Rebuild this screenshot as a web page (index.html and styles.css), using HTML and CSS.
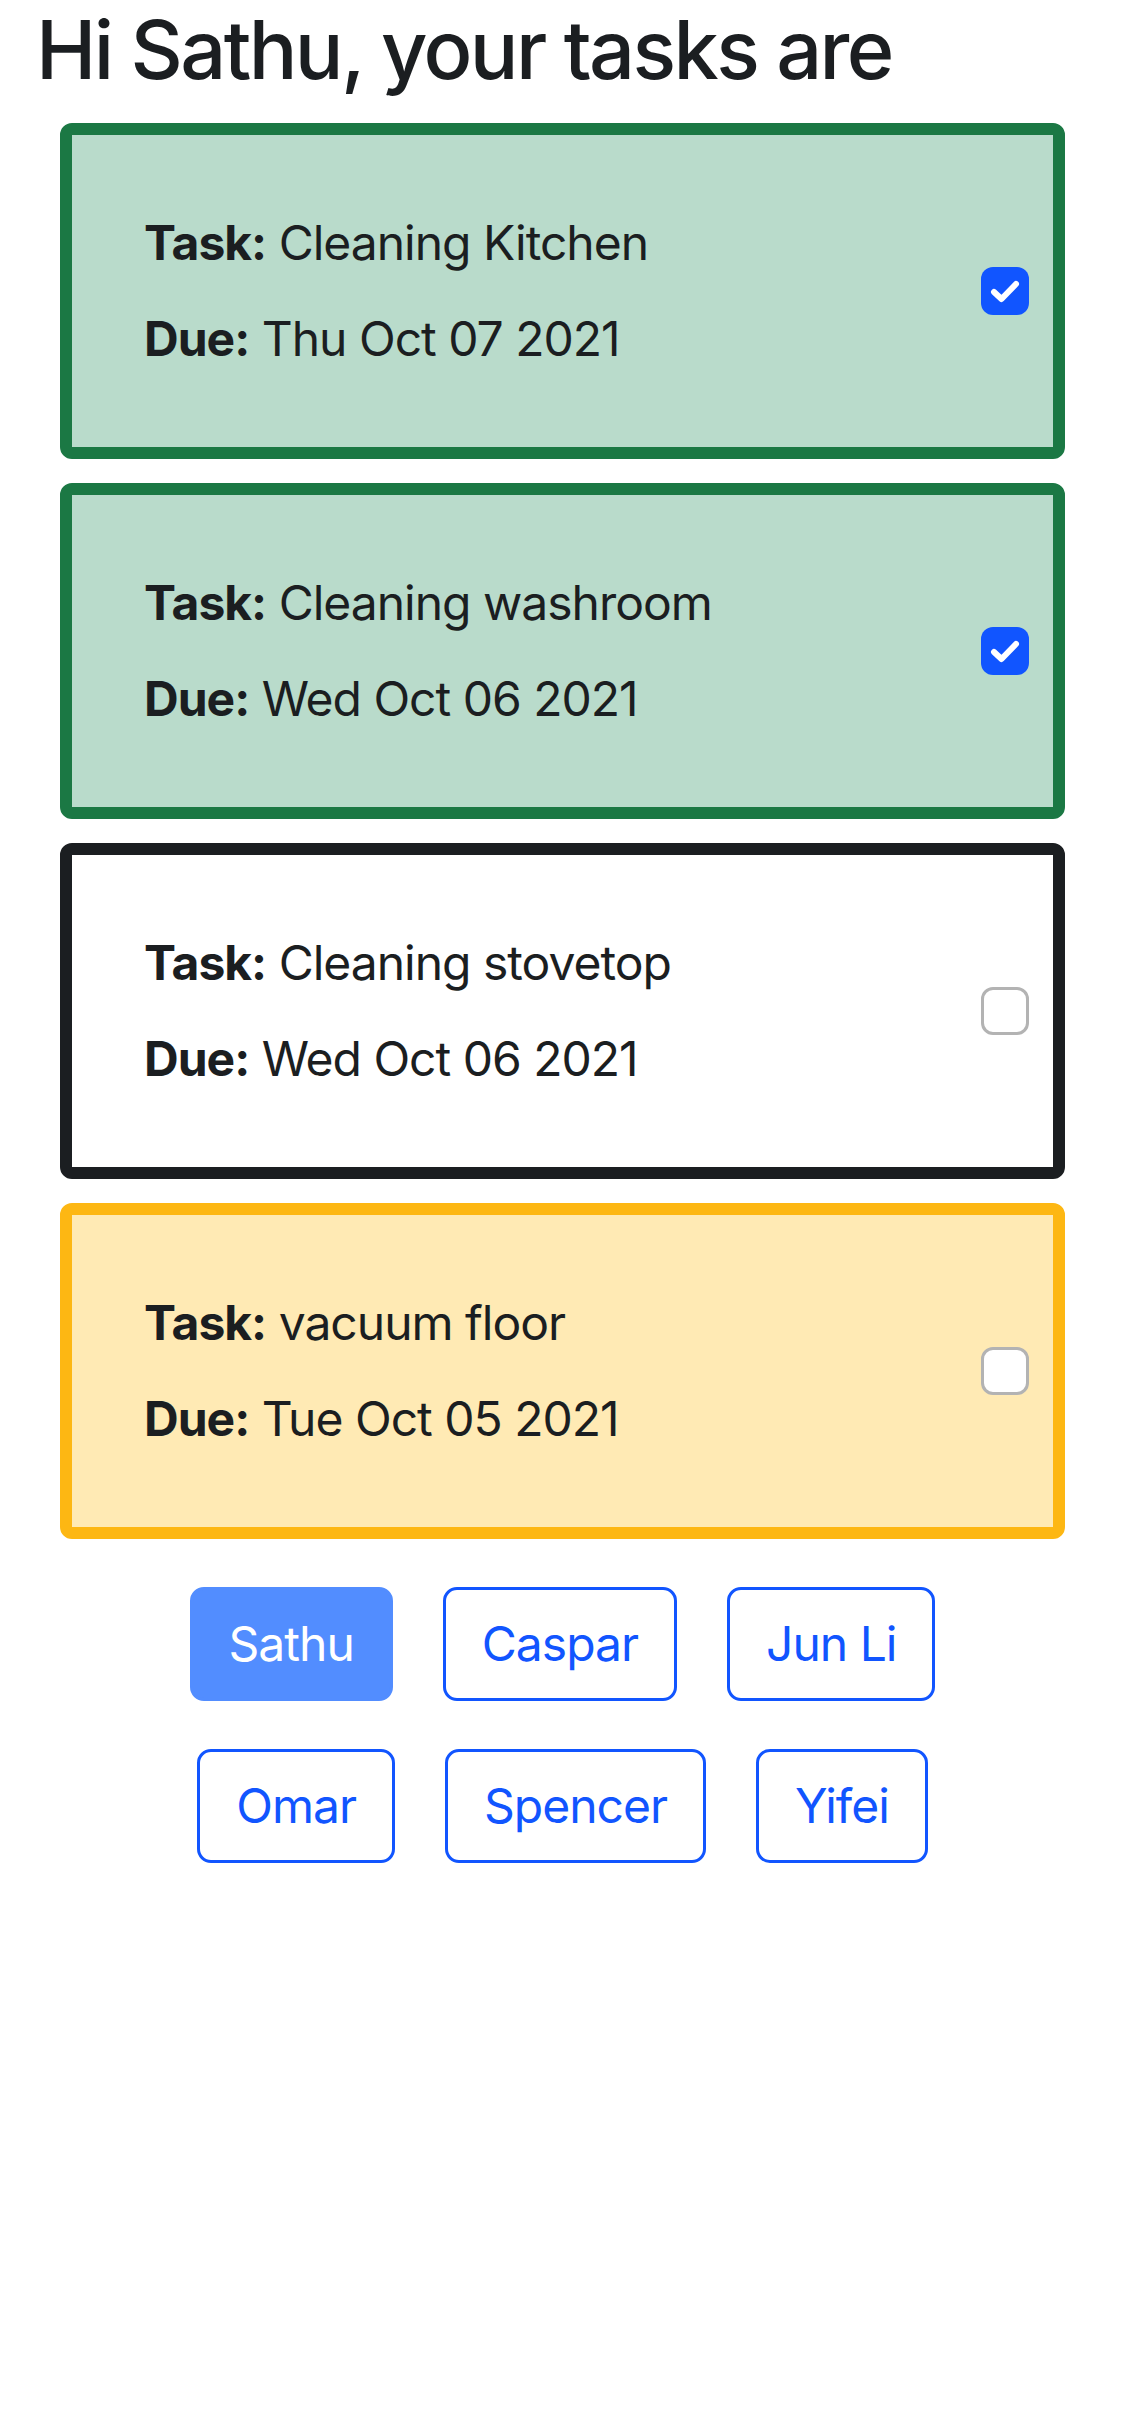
FILE: index.html
```html
<!DOCTYPE html>
<html lang="en">
<head>
<meta charset="utf-8">
<title>Tasks</title>
<link rel="stylesheet" href="styles.css">
</head>
<body>
<h1 class="title">Hi Sathu, your tasks are</h1>
<div class="list">
  <div class="card card-done">
    <div class="info">
      <div class="line"><b>Task:</b> Cleaning Kitchen</div>
      <div class="line"><b>Due:</b> Thu Oct 07 2021</div>
    </div>
    <span class="check checked"><svg viewBox="0 0 48 48" width="48" height="48"><path d="M13 25 L20.5 32 L35 17" fill="none" stroke="#fff" stroke-width="6" stroke-linecap="round" stroke-linejoin="round"/></svg></span>
  </div>
  <div class="card card-done">
    <div class="info">
      <div class="line"><b>Task:</b> Cleaning washroom</div>
      <div class="line"><b>Due:</b> Wed Oct 06 2021</div>
    </div>
    <span class="check checked"><svg viewBox="0 0 48 48" width="48" height="48"><path d="M13 25 L20.5 32 L35 17" fill="none" stroke="#fff" stroke-width="6" stroke-linecap="round" stroke-linejoin="round"/></svg></span>
  </div>
  <div class="card card-dark">
    <div class="info">
      <div class="line"><b>Task:</b> Cleaning stovetop</div>
      <div class="line"><b>Due:</b> Wed Oct 06 2021</div>
    </div>
    <span class="check"></span>
  </div>
  <div class="card card-warn">
    <div class="info">
      <div class="line"><b>Task:</b> vacuum floor</div>
      <div class="line"><b>Due:</b> Tue Oct 05 2021</div>
    </div>
    <span class="check"></span>
  </div>
</div>
<div class="people">
  <div class="row">
    <button class="btn btn-active">Sathu</button>
    <button class="btn">Caspar</button>
    <button class="btn">Jun Li</button>
  </div>
  <div class="row">
    <button class="btn">Omar</button>
    <button class="btn">Spencer</button>
    <button class="btn">Yifei</button>
  </div>
</div>
</body>
</html>
```
FILE: styles.css
```css
* { box-sizing: border-box; }
body {
  margin: 0;
  background: #fff;
  color: #1b1e21;
  font-family: Inter, "Noto Sans", "Liberation Sans", sans-serif;
}
.title {
  margin: 0;
  padding: 0 36px;
  font-size: 81px;
  line-height: 100px;
  font-weight: 500;
  letter-spacing: -2.6px;
}
.list {
  padding: 23px 60px 0;
  display: flex;
  flex-direction: column;
  gap: 24px;
}
.card {
  display: flex;
  align-items: center;
  border: 12px solid;
  border-radius: 12px;
  padding: 72px 24px 72px 72px;
}
.card-done { border-color: #1b7844; background: #b9dbcb; }
.card-dark { border-color: #1b1e21; background: #fff; }
.card-warn { border-color: #fdb713; background: #ffeab4; }
.info {
  flex: 1;
  display: flex;
  flex-direction: column;
  gap: 24px;
}
.line {
  font-size: 48px;
  line-height: 72px;
  letter-spacing: -1px;
}
.line b { font-weight: 700; }
.check {
  width: 48px;
  height: 48px;
  border-radius: 12px;
  border: 3px solid #b3b3b3;
  background: #fff;
  display: block;
}
.check.checked {
  border: none;
  background: #1155ff;
}
.check svg { display: block; }
.people {
  padding-top: 48px;
  display: flex;
  flex-direction: column;
  gap: 48px;
}
.row {
  display: flex;
  justify-content: center;
  gap: 50px;
}
.btn {
  font-family: inherit;
  font-size: 48px;
  line-height: 72px;
  letter-spacing: -1px;
  padding: 18px 36px;
  border: 3px solid #1155ff;
  border-radius: 14px;
  background: #fff;
  color: #1155ff;
  cursor: pointer;
}
.btn-active {
  background: #528dff;
  border-color: #528dff;
  color: #fff;
}
```
